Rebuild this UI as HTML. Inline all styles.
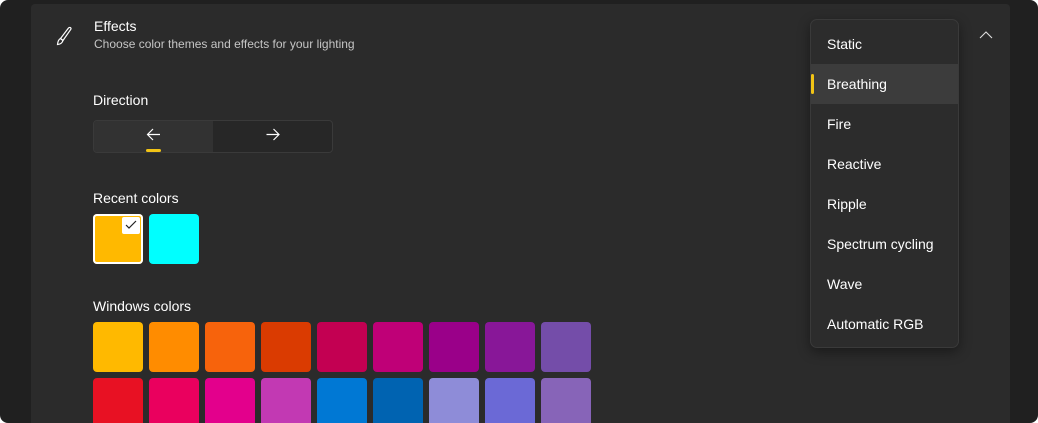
<!DOCTYPE html>
<html><head><style>
html,body{margin:0;padding:0;}
body{width:1038px;height:423px;background:#fff;overflow:hidden;font-family:"Segoe UI","Liberation Sans",sans-serif;}
.win{position:absolute;left:0;top:0;width:1038px;height:423px;background:#202020;border-radius:8px;overflow:hidden;}
.panel{position:absolute;left:31px;top:4px;width:979px;height:430px;background:#2b2b2b;border-radius:4px;}
.t{position:absolute;color:#fff;font-size:14px;white-space:nowrap;}
.sub{position:absolute;color:#c5c5c5;font-size:12px;white-space:nowrap;}
.seg{position:absolute;left:93px;top:120px;width:238px;height:31px;border:1px solid #3a3a3a;border-radius:4px;background:#272727;}
.seg .l{position:absolute;left:0;top:0;width:119px;height:31px;background:#323232;border-radius:3px 0 0 3px;}
.sw{position:absolute;width:50px;height:50px;border-radius:4px;}
.dd{position:absolute;left:810px;top:19px;width:147px;height:327px;background:#2c2c2c;border:1px solid #3a3a3a;border-radius:7px;box-shadow:0 4px 12px rgba(0,0,0,.4);}
.it{position:absolute;left:16px;color:#fff;font-size:14px;}
</style></head><body>
<div class="win">
<div class="panel"></div>
<svg style="position:absolute;left:51px;top:25px" width="24" height="24" viewBox="0 0 24 24" fill="none" stroke="#fff" stroke-width="1.2"><path d="M19 2.5c1 .2 1.3 1 .8 1.8L12 15.5l-2.5-2 8-10.5c.4-.5 1-.6 1.5-.5z"/><path d="M9.5 13.5l2.5 2c-.8 2.5-2.5 3.8-5.5 4 .3-3 1-5 3-6z"/></svg>
<div class="t" style="left:94px;top:18px">Effects</div>
<div class="sub" style="left:94px;top:37px">Choose color themes and effects for your lighting</div>
<div class="t" style="left:93px;top:92px">Direction</div>
<div class="seg"><div class="l"></div>
<svg style="position:absolute;left:51px;top:6px" width="18" height="16" viewBox="0 0 18 16" fill="none" stroke="#fff" stroke-width="1.2"><path d="M15 7.5H2.5M8 2L2.5 7.5 8 13"/></svg>
<div style="position:absolute;left:52px;top:28px;width:15px;height:3px;background:#f2c416;border-radius:2px"></div>
<svg style="position:absolute;left:170px;top:6px" width="18" height="16" viewBox="0 0 18 16" fill="none" stroke="#fff" stroke-width="1.2"><path d="M2.5 7.5H15M9.5 2L15 7.5 9.5 13"/></svg>
</div>
<div class="t" style="left:93px;top:190px">Recent colors</div>
<div class="sw" style="left:93px;top:214px;background:#ffb900;box-shadow:inset 0 0 0 2px #fff;"></div>
<div style="position:absolute;left:122px;top:217px;width:18px;height:17px;background:#fff;border-radius:2px"></div>
<svg style="position:absolute;left:124px;top:219px" width="14" height="12" viewBox="0 0 14 12" fill="none" stroke="#222" stroke-width="1.2"><path d="M2 6l3 3 7-7"/></svg>
<div class="sw" style="left:149px;top:214px;background:#00ffff"></div>
<div class="t" style="left:93px;top:298px">Windows colors</div>
<div class="sw" style="left:93px;top:322px;background:#ffb900"></div>
<div class="sw" style="left:149px;top:322px;background:#ff8c00"></div>
<div class="sw" style="left:205px;top:322px;background:#f7630c"></div>
<div class="sw" style="left:261px;top:322px;background:#da3b01"></div>
<div class="sw" style="left:317px;top:322px;background:#c30052"></div>
<div class="sw" style="left:373px;top:322px;background:#bf0077"></div>
<div class="sw" style="left:429px;top:322px;background:#9a0089"></div>
<div class="sw" style="left:485px;top:322px;background:#881798"></div>
<div class="sw" style="left:541px;top:322px;background:#744da9"></div>
<div class="sw" style="left:93px;top:378px;background:#e81123"></div>
<div class="sw" style="left:149px;top:378px;background:#ea005e"></div>
<div class="sw" style="left:205px;top:378px;background:#e3008c"></div>
<div class="sw" style="left:261px;top:378px;background:#c239b3"></div>
<div class="sw" style="left:317px;top:378px;background:#0078d4"></div>
<div class="sw" style="left:373px;top:378px;background:#0063b1"></div>
<div class="sw" style="left:429px;top:378px;background:#8e8cd8"></div>
<div class="sw" style="left:485px;top:378px;background:#6b69d6"></div>
<div class="sw" style="left:541px;top:378px;background:#8764b8"></div>
<svg style="position:absolute;left:978px;top:29px" width="16" height="12" viewBox="0 0 16 12" fill="none" stroke="#ddd" stroke-width="1.1"><path d="M2 9l6-6 6 6"/></svg>
<div class="dd">
<div style="position:absolute;left:0;top:44px;width:147px;height:40px;background:#3c3c3c"></div>
<div style="position:absolute;left:0;top:54px;width:3px;height:20px;background:#f2c416;border-radius:2px"></div>
<div class="it" style="top:16px">Static</div>
<div class="it" style="top:56px">Breathing</div>
<div class="it" style="top:96px">Fire</div>
<div class="it" style="top:136px">Reactive</div>
<div class="it" style="top:176px">Ripple</div>
<div class="it" style="top:216px">Spectrum cycling</div>
<div class="it" style="top:256px">Wave</div>
<div class="it" style="top:296px">Automatic RGB</div>
</div>
</div>
</body></html>
